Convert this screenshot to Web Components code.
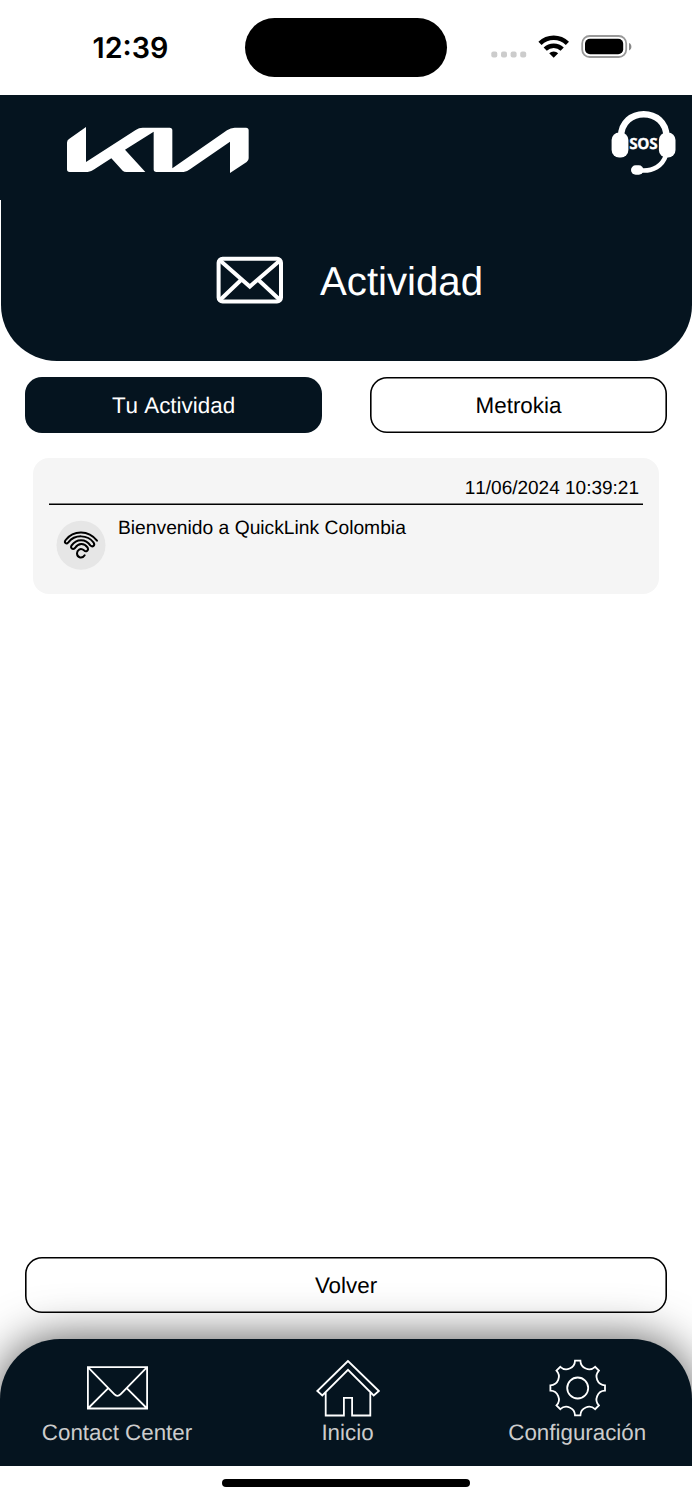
<!DOCTYPE html>
<html lang="es">
<head>
<meta charset="utf-8">
<title>Actividad</title>
<style>
html,body{margin:0;padding:0}
body{width:692px;height:1500px;overflow:hidden;background:#fff;color:#000;font-family:"Liberation Sans",Arial,sans-serif;text-rendering:geometricPrecision;--navy:#05141f}
</style>
</head>
<body>
<kia-app></kia-app>
<script>
function define(name, html){
  const t=document.createElement('template');
  t.innerHTML=html;
  customElements.define(name,class extends HTMLElement{
    constructor(){super();this.attachShadow({mode:'open'}).append(t.content.cloneNode(true));}
  });
}

define('status-bar',`<style>
:host{display:grid;grid-template-columns:245px 202px 1fr;height:95px;background:#fff;align-items:start}
.time{font:600 28.700px/36px Inter,sans-serif;padding:30px 0 0 92.500px}
.island{height:59px;margin-top:18px;border-radius:30px;background:#000}
svg{display:block}
</style>
<div class="time">12:39</div><div class="island"></div>
<svg width="245" height="95" viewBox="447 0 245 95">
<g fill="#ccc"><rect x="491.3" y="51.6" width="6" height="6" rx="2"/><rect x="501" y="51.6" width="6" height="6" rx="2"/><rect x="510.6" y="51.6" width="6" height="6" rx="2"/><rect x="520.2" y="51.6" width="6" height="6" rx="2"/></g>
<g fill="none" stroke="#000" stroke-width="4.6"><path d="M540 43.3a19.8 19.8 0 0 1 27.4 0"/><path d="M545.2 49.2a12.3 12.3 0 0 1 17 0"/></g>
<path d="M549.2 53.2a6.6 6.6 0 0 1 9 0L553.7 57.8Z"/>
<rect x="582.2" y="36" width="44" height="21" rx="7.5" fill="none" stroke="#999" stroke-width="1.8"/>
<rect x="585" y="38.7" width="38.2" height="15.6" rx="5"/>
<path d="M629 43c3.2 1 3.2 6.400 0 7.400z" fill="#888"/>
</svg>`);

define('kia-logo',`<style>:host{display:block}svg{display:block}</style>
<svg width="190" height="60" viewBox="37 32 570 180"><path fill="#fff" d="M52 97Q52 90 58 86L109 50V155L258 59Q268 52 279 52H360Q368 52 368 60V174L532 60Q543 52 555 52H589Q597 52 597 60V144Q597 151 591 155L541 188V94L421 177Q411 185 402 185H320Q312 185 312 177V64L226 118L287 185H230Q223 185 219 181L185 144L134 177Q123 185 114 185H60Q52 185 52 177Z"/></svg>`);

define('sos-button',`<style>:host{display:grid;width:72px;height:72px}
svg,span{grid-area:1/1}
span{font:700 15.300px/20px "Open Sans",sans-serif;color:#fff;-webkit-text-stroke:.300px #fff;align-self:start;justify-self:center;margin:27.300px 1.500px 0 0;letter-spacing:-.400px}</style>
<svg width="72" height="72" viewBox="608 107 72 72"><g fill="none" stroke="#fff"><path stroke-width="6.500" d="M621 137C621 106.500 666.500 106.500 666.500 137"/><path stroke-width="4.500" d="M666 155C662.500 166 653 171.500 641 170.500"/></g>
<g fill="#fff"><rect x="611.600" y="132.500" width="16.800" height="25" rx="7.500"/><rect x="658.900" y="132.500" width="16.600" height="25" rx="7.500"/><rect x="631" y="165.300" width="12.500" height="9.400" rx="4.700"/></g></svg><span>SOS</span>`);

define('app-header',`<style>:host{display:flex;height:105px;background:var(--navy);justify-content:space-between;box-sizing:border-box;padding:12px 12px 0 62px}
kia-logo{margin-top:14px}</style><kia-logo></kia-logo><sos-button></sos-button>`);

define('page-hero',`<style>:host{display:flex;height:160.500px;margin-left:1px;background:var(--navy);border-radius:0 0 56px 56px;box-sizing:border-box;padding:0 0 0 215px;align-items:center;gap:36px;color:#fff;font-size:40.200px;line-height:46px}svg{display:block}span{margin-top:3px}</style>
<svg width="68" height="48" viewBox="216 256 68 48" fill="none" stroke="#fff" stroke-width="4"><rect x="218.600" y="258.800" width="62.400" height="42.600" rx="4"/><path d="M219.500 260L249.800 286.500L280.500 260M219.500 300.500L240.500 280.500M280.500 300.500L259 280.500"/></svg><span><slot></slot></span>`);

define('pill-button',`<style>:host{display:flex;box-sizing:border-box;height:56px;box-shadow:inset 0 0 0 1.600px #000;border-radius:17px;padding-top:2px;align-items:center;justify-content:center;font-size:22.400px;line-height:26px;color:#000}
:host([active]){background:var(--navy);box-shadow:none;color:#fff;font-kerning:none}</style><slot></slot>`);

define('link-avatar',`<style>:host{display:block;margin-top:-.700px}svg{display:block}</style>
<svg width="50" height="50" viewBox="48 181 150 150"><circle cx="123" cy="256.500" r="73.500" fill="#e6e6e6"/>
<path fill="none" stroke="#000" stroke-width="6" stroke-linecap="round" stroke-linejoin="round" d="M171 243C145 211 101 211 77 241C71 249 79 255 85 248C104 224 143 224 161 249C166 257 158 264 151 257C137 236 109 237 95 257C90 265 98 272 105 265C115 250 132 249 143 264C147 273 138 278 132 272C121 263 111 272 111 281C111 296 128 297 134 287"/></svg>`);

define('activity-card',`<style>:host{display:block;box-sizing:border-box;height:136px;border-radius:16px;background:#f5f5f5;padding:17px 16px 0;font-size:19.250px}
.date{line-height:28px;font-size:19px;text-align:right;padding-right:4px;box-shadow:inset 0 -1.600px #000;box-sizing:border-box;height:30.500px;font-kerning:none}
.body{display:flex;gap:12px;padding:15.500px 0 0 7px;line-height:24px}
.text{margin-top:-4px}</style>
<div class="date"><slot name="date"></slot></div><div class="body"><link-avatar></link-avatar><div class="text"><slot></slot></div></div>`);

define('nav-item',`<style>:host{display:flex;flex-direction:column;align-items:center;font-size:22.350px;line-height:26px;color:#ccc}
::slotted(svg){display:block;margin-bottom:2px}</style><slot name="icon"></slot><span><slot></slot></span>`);

define('bottom-nav',`<style>:host{display:grid;grid-template-columns:234px 227px 1fr;height:127px;background:var(--navy);border-radius:60px 60px 0 0;box-shadow:0 0 47px rgba(0,0,0,.68);box-sizing:border-box;padding-top:19px}
svg{fill:none;stroke:#fff;stroke-width:1.800}
nav-item:last-child{padding-left:1.500px}</style>
<nav-item><svg slot="icon" width="72" height="60" viewBox="81.300 1358.300 72 60"><path d="M88.200 1367.400H147.400V1408.800H88.200ZM88.200 1367.400L114.500 1394.500Q117.700 1398 121 1394.500L147.400 1367.400M88.200 1408.800L108.600 1388.500M147.400 1408.800L127 1388.500"/></svg>Contact Center</nav-item>
<nav-item><svg slot="icon" width="72" height="60" viewBox="311.700 1358 72 60"><path d="M347.700 1361L317 1391L322 1395.500L347.700 1369.800L373.400 1395.500L378.600 1391ZM325.400 1392.500V1415.500H343.600V1397.900H351.800V1415.500H370V1392.500"/></svg>Inicio</nav-item>
<nav-item><svg slot="icon" width="72" height="60" viewBox="541 1358 72 60"><circle cx="577.700" cy="1388" r="10.500"/><path id="gear"/></svg>Configuración</nav-item>`);

define('kia-app',`<style>:host{display:flex;flex-direction:column;width:692px;height:1500px;background:#fff}
.tabs{display:grid;grid-template-columns:297px 297px;gap:48px;padding:16.500px 25px 0}
activity-card{margin:24.500px 33px 0}
.back{margin:auto 25px 26px}
.home{height:34px;flex:none;background:#fff;position:relative;display:flex;justify-content:center;align-items:start}
.home i{width:248px;height:8px;border-radius:4px;background:#000;margin-top:13px}
</style>
<status-bar></status-bar><app-header></app-header><page-hero>Actividad</page-hero>
<div class="tabs"><pill-button active>Tu Actividad</pill-button><pill-button>Metrokia</pill-button></div>
<activity-card><span slot="date">11/06/2024 10:39:21</span>Bienvenido a QuickLink Colombia</activity-card>
<pill-button class="back">Volver</pill-button>
<bottom-nav></bottom-nav><div class="home"><i></i></div>`);

/* Eight flat teeth joined by concave arcs. */
const nav=document.querySelector('kia-app').shadowRoot.querySelector('bottom-nav').shadowRoot;
let d='';
for(let k=0;k<8;k++){
  const a=k*Math.PI/4,c=Math.cos(a),s=Math.sin(a);
  const p=(x,y)=>(577.7+x*c-y*s).toFixed(2)+' '+(1388+x*s+y*c).toFixed(2);
  d+=(k?'A8.700 8.700 0 0 0 ':'M')+p(-2.7,-27.3)+'L'+p(2.7,-27.3);
}
d+='A8.700 8.700 0 0 0 575 1360.700Z';
nav.getElementById('gear').setAttribute('d',d);
</script>
</body>
</html>
